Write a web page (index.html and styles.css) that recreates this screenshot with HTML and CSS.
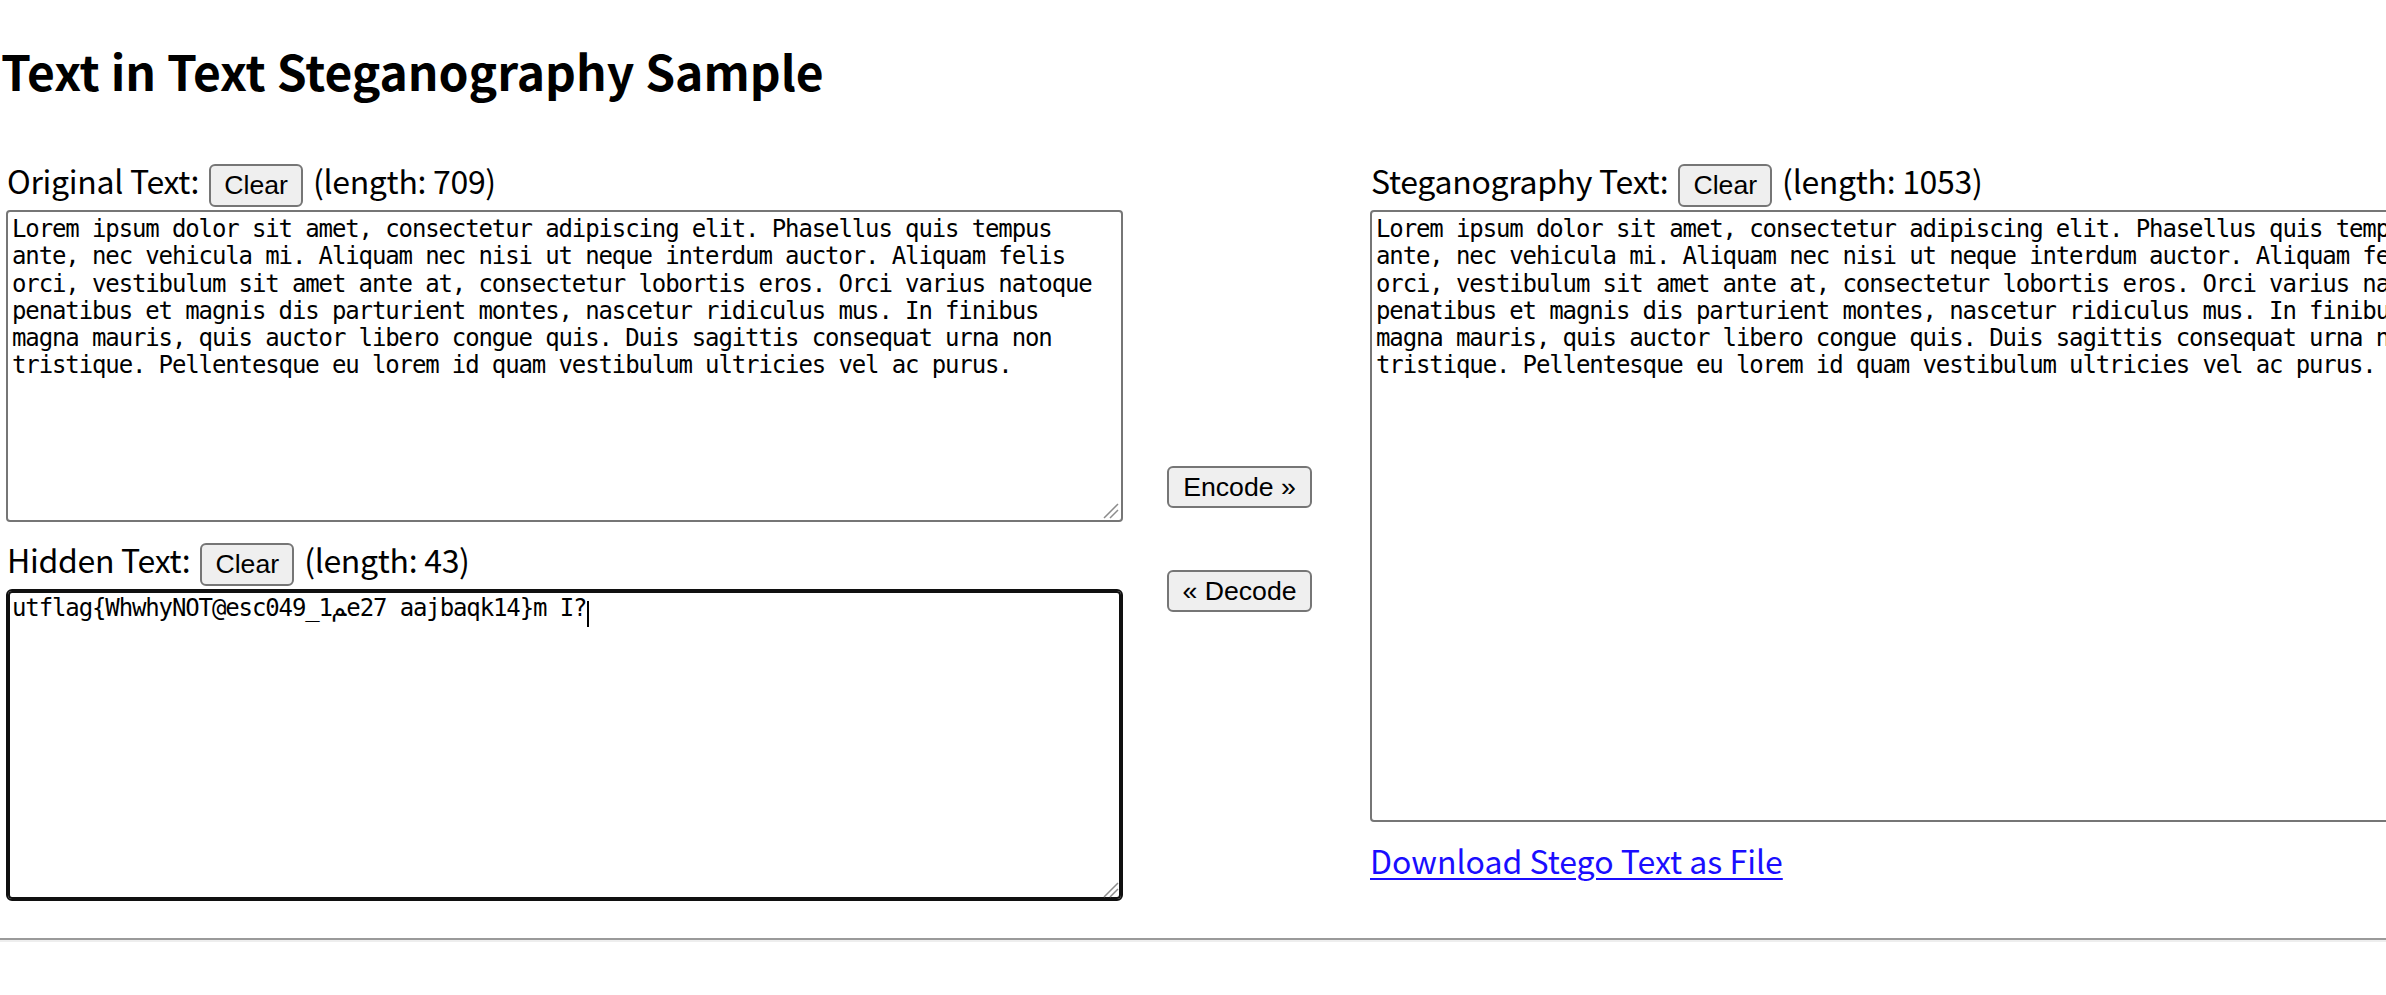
FILE: index.html
```html
<!DOCTYPE html>
<html lang="en">
<head>
<meta charset="utf-8">
<title>Text in Text Steganography Sample</title>
<link rel="stylesheet" href="styles.css">
</head>
<body>
<h1 class="title">Text in Text Steganography Sample</h1>
<div class="main">
  <div class="col left">
    <div class="label-row">
      <span class="label">Original Text:</span>
      <button class="btn">Clear</button>
      <span class="label">(length: 709)</span>
    </div>
    <div class="ta-wrap">
      <textarea class="ta ta-orig" spellcheck="false">Lorem ipsum dolor sit amet, consectetur adipiscing elit. Phasellus quis tempus
ante, nec vehicula mi. Aliquam nec nisi ut neque interdum auctor. Aliquam felis
orci, vestibulum sit amet ante at, consectetur lobortis eros. Orci varius natoque
penatibus et magnis dis parturient montes, nascetur ridiculus mus. In finibus
magna mauris, quis auctor libero congue quis. Duis sagittis consequat urna non
tristique. Pellentesque eu lorem id quam vestibulum ultricies vel ac purus.</textarea>
      <svg class="grip" width="16" height="16" viewBox="0 0 16 16"><path d="M1 15 L15 1 M7 15 L15 7" stroke="#8c8c8c" stroke-width="1.5" fill="none"/></svg>
    </div>
    <div class="label-row row2">
      <span class="label">Hidden Text:</span>
      <button class="btn">Clear</button>
      <span class="label">(length: 43)</span>
    </div>
    <div class="ta-wrap">
      <textarea class="ta ta-hidden" spellcheck="false">utflag{WhwhyNOT@esc049_1ﻢe27 aajbaqk14}m I?</textarea>
      <span class="caret"></span>
      <svg class="grip" width="16" height="16" viewBox="0 0 16 16"><path d="M1 15 L15 1 M7 15 L15 7" stroke="#8c8c8c" stroke-width="1.5" fill="none"/></svg>
    </div>
  </div>
  <div class="col mid">
    <button class="btn btn-wide">Encode »</button>
    <button class="btn btn-wide">« Decode</button>
  </div>
  <div class="col right">
    <div class="label-row">
      <span class="label">Steganography Text:</span>
      <button class="btn">Clear</button>
      <span class="label">(length: 1053)</span>
    </div>
    <textarea class="ta ta-stego" spellcheck="false">Lorem ipsum dolor sit amet, consectetur adipiscing elit. Phasellus quis tempus
ante, nec vehicula mi. Aliquam nec nisi ut neque interdum auctor. Aliquam felis
orci, vestibulum sit amet ante at, consectetur lobortis eros. Orci varius natoque
penatibus et magnis dis parturient montes, nascetur ridiculus mus. In finibus
magna mauris, quis auctor libero congue quis. Duis sagittis consequat urna non
tristique. Pellentesque eu lorem id quam vestibulum ultricies vel ac purus.</textarea>
    <a class="dl" href="#">Download Stego Text as File</a>
  </div>
</div>
<hr class="rule">
</body>
</html>
```
FILE: styles.css
```css
html, body {
  margin: 0;
  padding: 0;
  background: #ffffff;
  overflow: hidden;
}
body {
  color: #000000;
  font-family: "Noto Sans CJK JP", "Noto Sans", sans-serif;
}
.title {
  margin: 40px 0 0 1px;
  font-size: 48px;
  line-height: 60px;
  font-weight: 700;
  white-space: nowrap;
}
.main {
  display: flex;
  align-items: flex-start;
  margin-top: 64px;
  width: 2600px;
}
.col {
  display: flex;
  flex-direction: column;
}
.left {
  margin-left: 6px;
  width: 1117px;
}
.label-row {
  display: flex;
  align-items: baseline;
  gap: 10px;
  height: 43px;
  white-space: nowrap;
}
.label-row .label:first-child {
  margin-left: 1px;
}
.row2 {
  margin-top: 21px;
}
.label {
  font-size: 32px;
  font-weight: 400;
  line-height: 32px;
  letter-spacing: -0.3px;
}
.btn {
  box-sizing: border-box;
  height: 43px;
  padding: 0 13px;
  background: #efefef;
  border: 2px solid #767676;
  border-radius: 6px;
  font-family: "Liberation Sans", Arial, sans-serif;
  font-size: 26.67px;
  color: #000000;
}
.btn-wide {
  width: 145px;
  height: 42px;
  padding: 0;
}
.ta-wrap {
  position: relative;
  margin-top: 3px;
}
.ta {
  display: block;
  box-sizing: border-box;
  width: 1117px;
  height: 312px;
  margin: 0;
  padding: 4px;
  border: 2px solid #767676;
  border-radius: 4px;
  font-family: "DejaVu Sans Mono", monospace;
  font-size: 24px;
  letter-spacing: -1.12px;
  line-height: 27.3px;
  color: #000000;
  background: #ffffff;
  resize: none;
  overflow: hidden;
  outline: none;
  white-space: pre-wrap;
}
.ta-hidden {
  border: 2px solid #101010;
  box-shadow: inset 0 0 0 2px #101010;
  border-radius: 6px;
  padding: 4px;
}
.caret {
  position: absolute;
  left: 581px;
  top: 12px;
  width: 2px;
  height: 26px;
  background: #000000;
}
.grip {
  position: absolute;
  right: 4px;
  bottom: 3px;
}
.mid {
  margin-left: 44px;
  padding-top: 302px;
  gap: 62px;
}
.right {
  margin-left: 58px;
}
.ta-stego {
  margin-top: 3px;
  height: 612px;
}
.dl {
  margin-top: 18px;
  font-size: 32px;
  line-height: 40px;
  color: #1a0dff;
  text-decoration: underline;
  text-decoration-thickness: 2px;
  text-underline-offset: 4px;
  white-space: nowrap;
  align-self: flex-start;
}
.rule {
  margin: 37px 0 0 0;
  width: 2600px;
  height: 0;
  border: 0;
  border-top: 2px solid #9a9a9a;
  border-bottom: 2px solid #eeeeee;
}
```
